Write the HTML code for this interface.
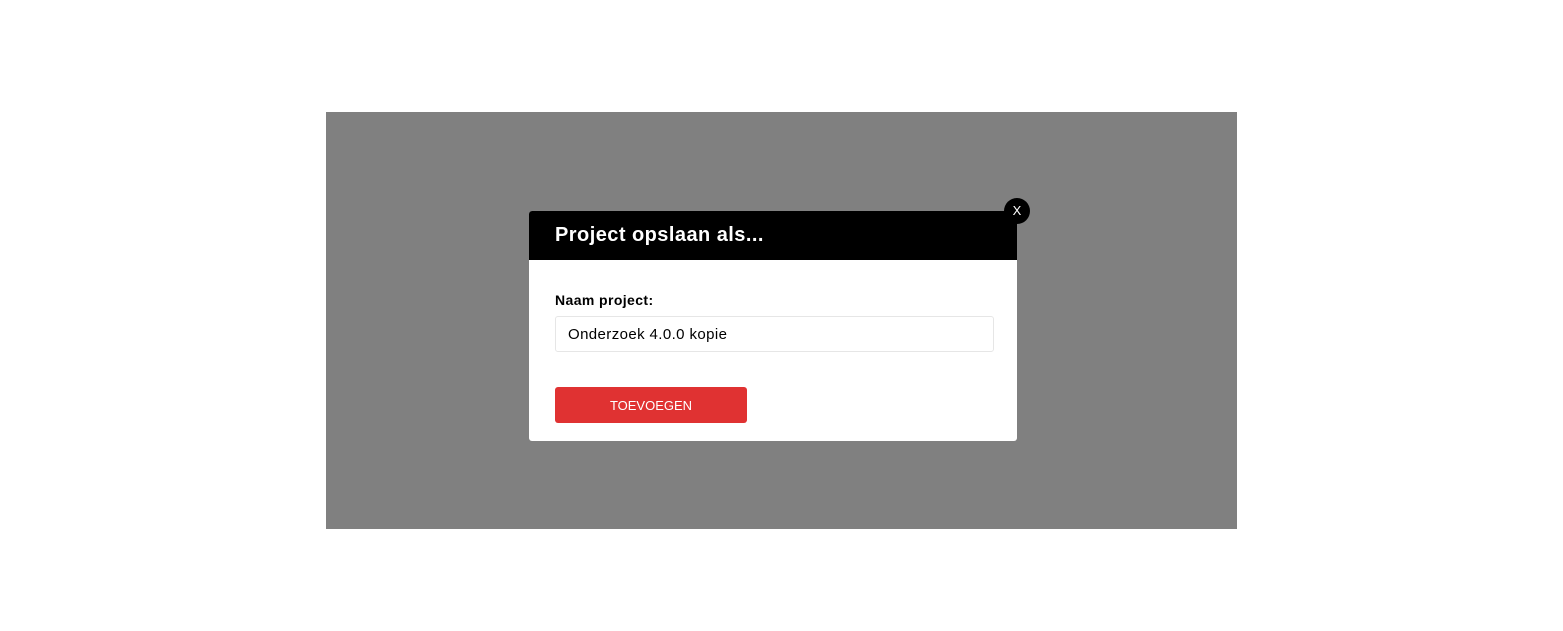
<!DOCTYPE html>
<html><head><style>
body{margin:0;width:1563px;height:631px;background:#fff;position:relative;overflow:hidden;font-family:"Liberation Sans",sans-serif}
.ov{position:absolute;left:326px;top:112px;width:911px;height:417px;background:#808080}
.m{position:absolute;left:529px;top:211px;width:488px;height:230px;background:#fff;border-radius:3px;overflow:hidden}
.h{height:49px;background:#000;color:#fff;font-weight:bold;font-size:20px;line-height:49px;padding-left:26px;letter-spacing:0.45px}
.lbl{position:absolute;left:26px;top:81px;font-size:14px;font-weight:bold;color:#000;letter-spacing:0.4px}
.in{position:absolute;left:26px;top:105px;height:34px;border:1px solid #e6e6e6;border-radius:3px;font-size:15px;line-height:36px;padding-left:12px;width:425px;letter-spacing:0.4px}
.b{position:absolute;left:26px;top:176px;width:192px;height:36px;background:#e03232;border-radius:3px;color:#fff;font-size:13px;text-align:center;line-height:37px}
.x{position:absolute;left:1004px;top:198px;width:26px;height:26px;border-radius:50%;background:#000;color:#fff;font-size:13px;text-align:center;line-height:26px}
</style></head><body>
<div class="ov"></div>
<div class="m">
<div class="h">Project opslaan als...</div>
<div class="lbl">Naam project:</div>
<div class="in">Onderzoek 4.0.0 kopie</div>
<div class="b">TOEVOEGEN</div>
</div>
<div class="x">X</div>
</body></html>
